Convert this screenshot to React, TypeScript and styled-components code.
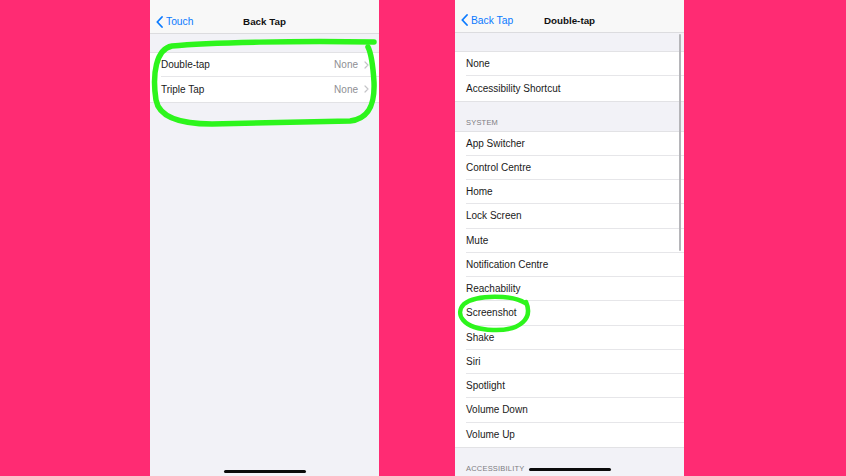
import React from 'react';
import styled, { createGlobalStyle } from 'styled-components';

const GlobalStyle = createGlobalStyle`
  html, body {
    margin: 0;
    padding: 0;
    background: #ff2b73;
  }
  body {
    font-family: "Liberation Sans", Arial, sans-serif;
    -webkit-font-smoothing: antialiased;
  }
`;

const Page = styled.div`
  width: 846px;
  height: 476px;
  display: flex;
  flex-direction: row;
  align-items: stretch;
  gap: 76px;
  padding-left: 150px;
  box-sizing: border-box;
  overflow: hidden;
  background: #ff2b73;
`;

const Phone = styled.div`
  position: relative;
  width: 229px;
  height: 476px;
  background: #f2f2f7;
  overflow: hidden;
  display: flex;
  flex-direction: column;
`;

const NavBar = styled.div<{ height: number; drop: number }>`
  flex: none;
  height: ${({ height }) => height}px;
  background: #f8f8f8;
  border-bottom: 1px solid #dcdcdf;
  display: grid;
  grid-template-columns: 1fr auto 1fr;
  align-items: center;
  padding: ${({ drop }) => drop}px 0 0;
  box-sizing: border-box;
`;

const Back = styled.div`
  display: flex;
  align-items: center;
  gap: 3px;
  padding-left: 6px;
  color: #0a7aff;
  font-size: 10.3px;
`;

const Title = styled.div`
  font-weight: bold;
  font-size: 9.8px;
  color: #111;
`;

const Spacer = styled.div<{ size: number }>`
  flex: none;
  height: ${({ size }) => size}px;
`;

const SectionHeader = styled.div`
  flex: none;
  height: 29px;
  padding: 0 11px 4px;
  box-sizing: border-box;
  display: flex;
  align-items: flex-end;
  font-size: 7.5px;
  letter-spacing: 0.2px;
  color: #7d7d82;
`;

const Group = styled.div`
  flex: none;
  background: #fff;
  border-top: 1px solid #e2e2e5;
  border-bottom: 1px solid #e2e2e5;
`;

const Row = styled.div<{ last?: boolean }>`
  height: 24.25px;
  margin-left: 11px;
  padding-right: 10px;
  display: flex;
  align-items: center;
  justify-content: space-between;
  font-size: 10px;
  color: #1a1a1a;
  box-sizing: border-box;
  border-bottom: ${({ last }) => (last ? 'none' : '1px solid #e6e6e9')};
`;

const Value = styled.div`
  display: flex;
  align-items: center;
  gap: 6px;
  color: #8e8e93;
`;

const HomeBar = styled.div<{ bottom: number }>`
  position: absolute;
  left: 50%;
  bottom: ${({ bottom }) => bottom}px;
  width: 82px;
  height: 3px;
  margin-left: -41px;
  border-radius: 2px;
  background: #0b0b0b;
`;

const ScrollIndicator = styled.div`
  position: absolute;
  right: 3px;
  top: 34px;
  width: 2.5px;
  height: 217px;
  border-radius: 2px;
  background: #b5b5b9;
`;

const Scribble = styled.svg`
  position: absolute;
  left: 0;
  top: 0;
  pointer-events: none;
`;

const BackChevron = () => (
  <svg width="7" height="12" viewBox="0 0 7 12">
    <path d="M6 1 L1.3 6 L6 11" fill="none" stroke="#0a7aff" strokeWidth="1.8" strokeLinecap="round" strokeLinejoin="round" />
  </svg>
);

const Chevron = () => (
  <svg width="5" height="8" viewBox="0 0 5 8">
    <path d="M1 1 L4 4 L1 7" fill="none" stroke="#c4c4c7" strokeWidth="1.2" strokeLinecap="round" strokeLinejoin="round" />
  </svg>
);

const systemActions = [
  'App Switcher',
  'Control Centre',
  'Home',
  'Lock Screen',
  'Mute',
  'Notification Centre',
  'Reachability',
  'Screenshot',
  'Shake',
  'Siri',
  'Spotlight',
  'Volume Down',
  'Volume Up',
];

const App = () => {
  return (
    <>
      <GlobalStyle />
      <Page>
        <Phone>
          <NavBar height={34} drop={10}>
            <Back>
              <BackChevron />
              <span>Touch</span>
            </Back>
            <Title>Back Tap</Title>
            <div />
          </NavBar>
          <Spacer size={18} />
          <Group>
            <Row>
              <span>Double-tap</span>
              <Value>None <Chevron /></Value>
            </Row>
            <Row last>
              <span>Triple Tap</span>
              <Value>None <Chevron /></Value>
            </Row>
          </Group>
          <HomeBar bottom={3} />
          <Scribble width="229" height="140" viewBox="0 0 229 140">
            <path
              d="M224 42 C150 41 60 42 22 46 C6 49 2 74 6 100 C9 117 30 124 62 124 L200 121 C218 119 225 106 224 82 C223 66 222 55 218 47"
              fill="none"
              stroke="#2df51c"
              strokeWidth="5.5"
              strokeLinecap="round"
              strokeLinejoin="round"
            />
          </Scribble>
        </Phone>

        <Phone>
          <NavBar height={33} drop={8}>
            <Back>
              <BackChevron />
              <span>Back Tap</span>
            </Back>
            <Title>Double-tap</Title>
            <div />
          </NavBar>
          <Spacer size={18} />
          <Group>
            <Row>None</Row>
            <Row last>Accessibility Shortcut</Row>
          </Group>
          <SectionHeader>SYSTEM</SectionHeader>
          <Group>
            {systemActions.map((action, i) => (
              <Row key={action} last={i === systemActions.length - 1}>
                {action}
              </Row>
            ))}
          </Group>
          <SectionHeader>ACCESSIBILITY</SectionHeader>
          <ScrollIndicator />
          <HomeBar bottom={5} />
          <Scribble width="229" height="476" viewBox="0 0 229 476">
            <path
              d="M70 303 C58 295 22 294 9 304 C0 313 6 329 38 330 C66 331 78 318 71 302"
              fill="none"
              stroke="#2df51c"
              strokeWidth="4.5"
              strokeLinecap="round"
              strokeLinejoin="round"
            />
          </Scribble>
        </Phone>
      </Page>
    </>
  );
};

export default App;
